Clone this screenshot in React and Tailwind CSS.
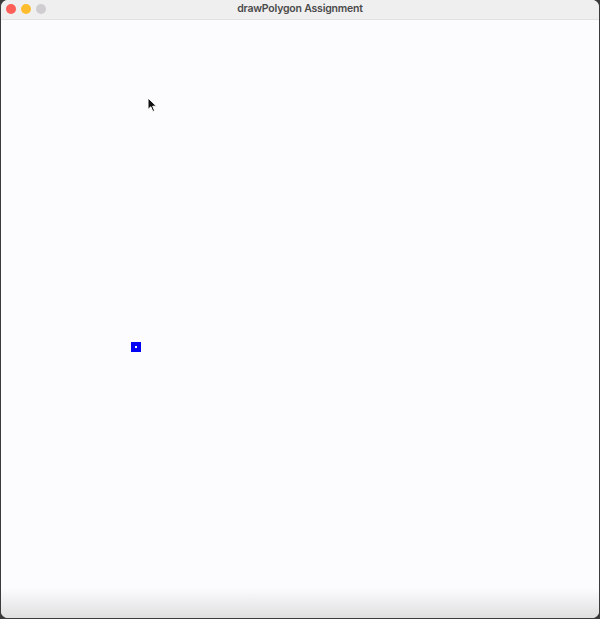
export default function App() {
  return (
    <div className="w-[600px] h-[619px] bg-[#3b3b3b] p-px pt-0" style={{ fontFamily: "Inter, 'Liberation Sans', sans-serif" }}>
      <div className="w-full h-full flex flex-col rounded-[7px] overflow-hidden bg-[#fcfbfd]">
        {/* title bar */}
        <div className="relative h-[20px] shrink-0 bg-[#f0eff0] border-b border-[#e2e1e2] flex items-center justify-center">
          <div className="absolute left-[5px] top-[4px] flex gap-[5px]">
            <span className="w-[10px] h-[10px] rounded-full bg-[#fe5f57]" />
            <span className="w-[10px] h-[10px] rounded-full bg-[#febc2e]" />
            <span className="w-[10px] h-[10px] rounded-full bg-[#cfcdcf]" />
          </div>
          <span className="text-[10.5px] font-semibold tracking-[-0.2px] text-[#4a4a4a] leading-none">drawPolygon Assignment</span>
        </div>
        {/* canvas */}
        <div className="relative flex-1 bg-gradient-to-b from-[#fcfbfd] from-[95%] to-[#e0dfe0]">
          <div className="absolute left-[130px] top-[322px] w-[10px] h-[10px] bg-[#0000f5] flex items-center justify-center">
            <span className="w-[2px] h-[2px] bg-white" />
          </div>
          <svg className="absolute left-[146px] top-[77px]" width="12" height="16" viewBox="0 0 12 16">
            <path d="M1 1 L1 12.5 L3.8 9.8 L5.8 14.5 L7.6 13.7 L5.7 9.2 L9.5 9.2 Z" fill="#111" stroke="#fff" strokeWidth="1" />
          </svg>
        </div>
      </div>
    </div>
  );
}
